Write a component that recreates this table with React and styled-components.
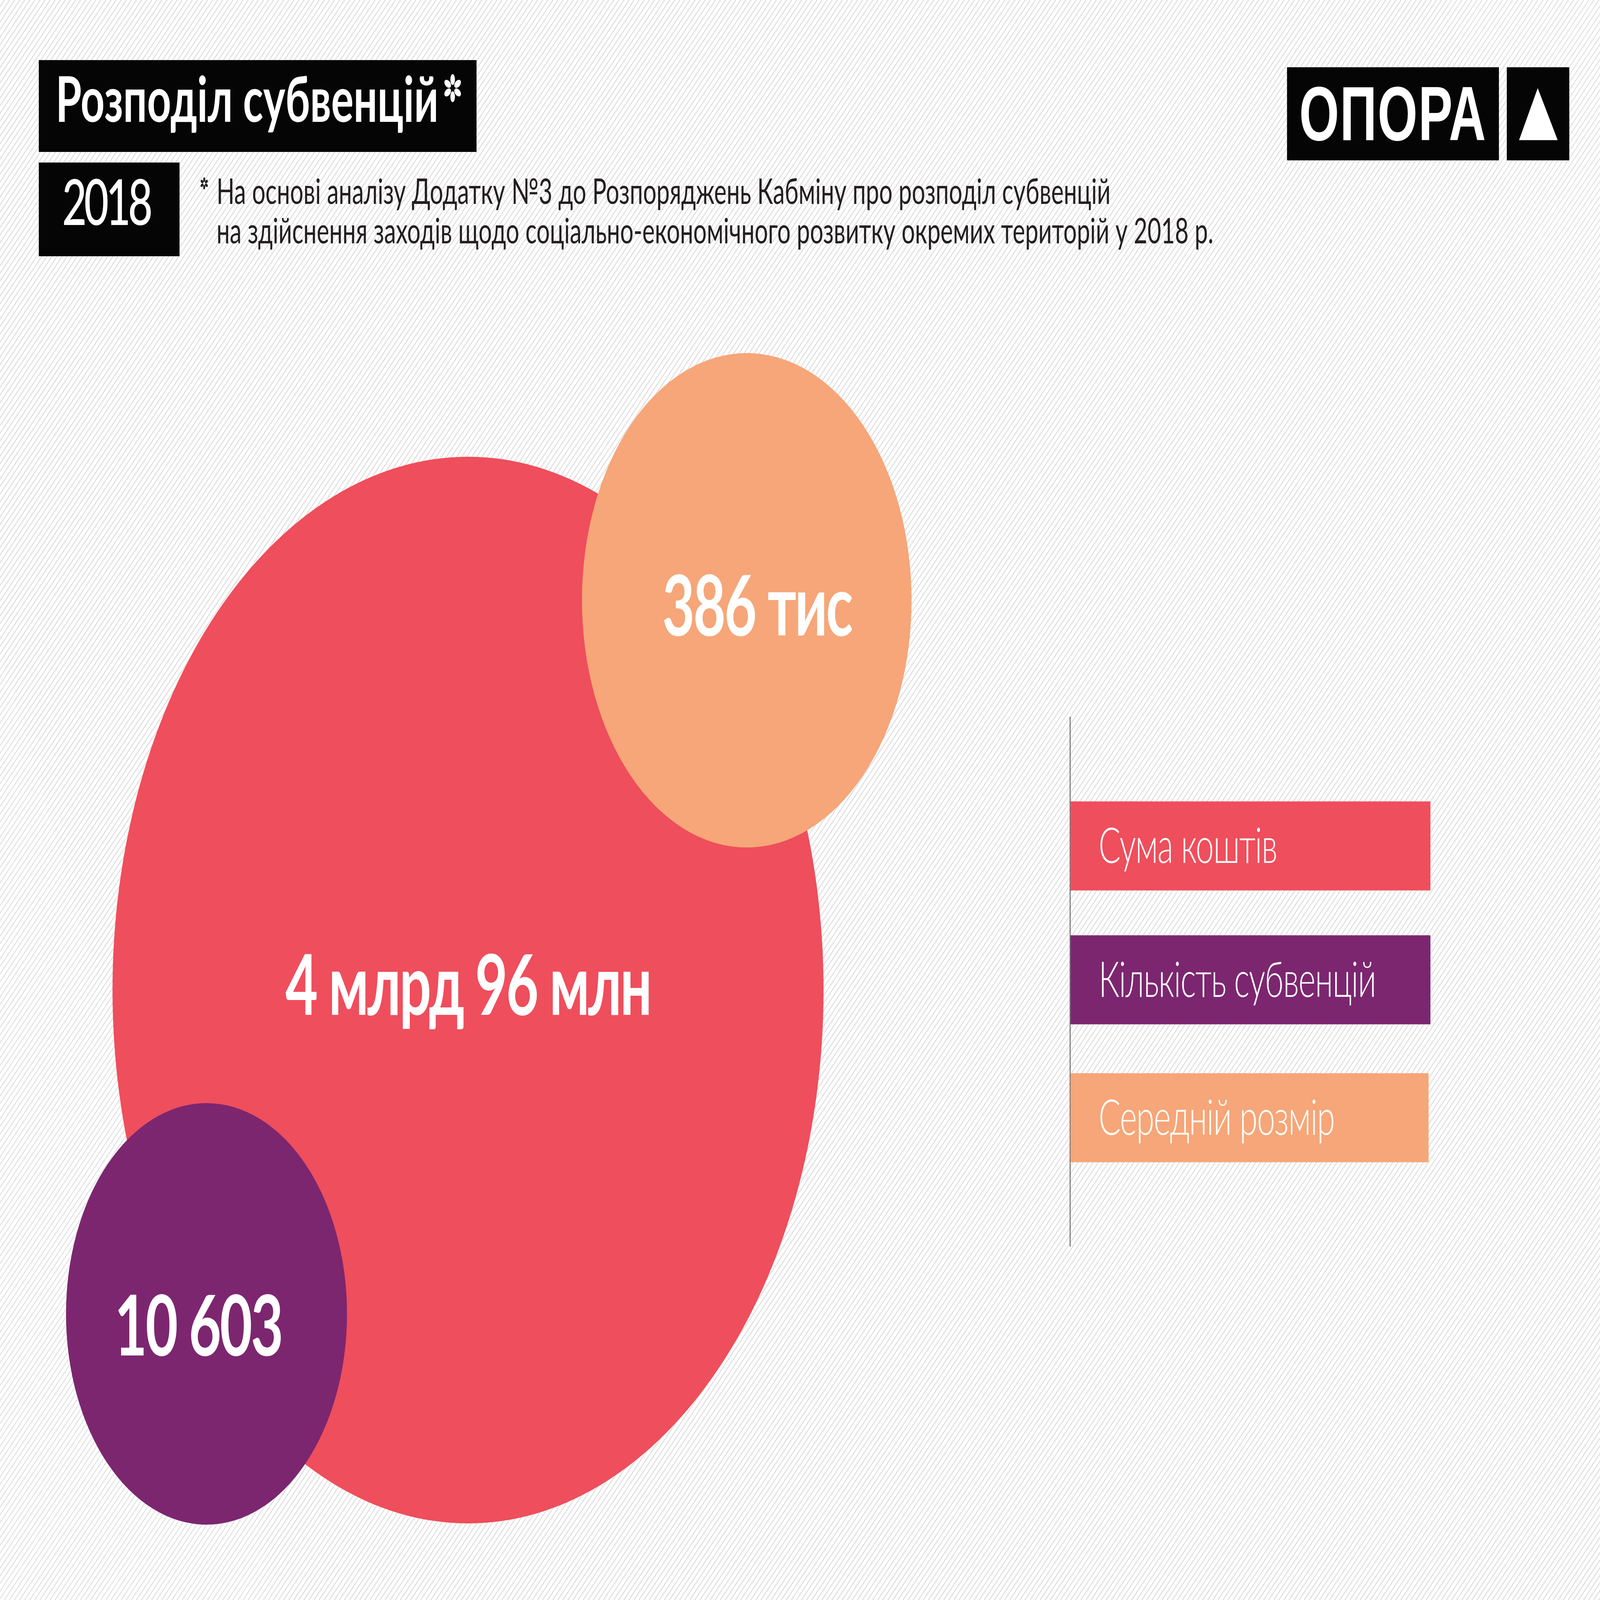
import React, { useEffect, useState } from "react";
import styled, { createGlobalStyle } from "styled-components";

const DESIGN_W = 7709;
const DESIGN_H = 5139;

const GlobalStyle = createGlobalStyle`
  html, body { margin: 0; padding: 0; overflow: hidden; }
  body { background: #fff; font-family: Lato, "Open Sans", sans-serif; }
`;

const Viewport = styled.div`
  width: 100vw;
  height: 100vh;
  overflow: hidden;
`;

const Page = styled.div`
  width: ${DESIGN_W}px;
  height: ${DESIGN_H}px;
  overflow: hidden;
  transform-origin: 0 0;
  background-color: #fff;
  background-image: repeating-linear-gradient(135deg, #fff 0 13.5px, #dedede 13.5px 17.3px);
  font-family: Lato, "Open Sans", sans-serif;
`;

const Header = styled.header`
  display: flex;
  justify-content: space-between;
  align-items: flex-start;
  padding: 193px 148px 0 187px;
`;

const HeadLeft = styled.div`
  display: flex;
  flex-direction: column;
  gap: 34px;
`;

const TitleBox = styled.div`
  box-sizing: border-box;
  width: 2109px;
  height: 295px;
  padding: 20px 0 0 81px;
  background: #050505;
  display: flex;
  align-items: flex-start;
  white-space: nowrap;
`;

const Title = styled.h1`
  margin: 0;
  font-size: 202px;
  line-height: 1;
  font-weight: 700;
  color: #fff;
`;

const TitleStar = styled.span`
  margin: 24px 0 0 22px;
  display: block;
  svg { display: block; }
`;

const SubRow = styled.div`
  display: flex;
  align-items: flex-start;
`;

const YearBox = styled.div`
  box-sizing: border-box;
  width: 678px;
  height: 301px;
  padding: 20px 30px 0 0;
  background: #050505;
  color: #fff;
  font-size: 205px;
  line-height: 1;
  font-weight: 500;
  letter-spacing: -13px;
  text-align: center;
`;

const Note = styled.div`
  display: flex;
  align-items: flex-start;
  margin-left: 99px;
  padding-top: 25px;
  color: #231f20;
  font-size: 114px;
  line-height: 127px;
  font-weight: 400;
  white-space: nowrap;
`;

const NoteStar = styled.span`
  display: block;
  margin: 22px 39px 0 0;
  svg { display: block; }
`;

const NoteLine = styled.span`
  display: block;
`;

const Logo = styled.div`
  display: flex;
  gap: 38px;
  margin-top: 23px;
`;

const LogoWord = styled.div`
  width: 1021px;
  height: 299px;
  background: #050505;
  color: #fff;
  display: flex;
  align-items: center;
  justify-content: center;
  font-family: "Liberation Sans", Arial, sans-serif;
  font-weight: 700;
  font-size: 247px;
  line-height: 1;
  letter-spacing: 4px;
`;

const LogoMark = styled.div`
  width: 301px;
  height: 299px;
  background: #050505;
  svg { display: block; }
`;

const Main = styled.main`
  display: flex;
  align-items: flex-start;
`;

const Chart = styled.div`
  position: relative;
  flex-shrink: 0;
  width: 5154px;
  height: 4316px;
`;

const Bubble = styled.div`
  position: absolute;
  left: ${(p) => p.$x}px;
  top: ${(p) => p.$y}px;
  width: ${(p) => p.$size}px;
  height: ${(p) => p.$size}px;
  border-radius: 50%;
  background: ${(p) => p.$color};
  display: flex;
  align-items: center;
  justify-content: center;
`;

const BubbleLabel = styled.span`
  color: #fff;
  font-size: 270px;
  line-height: 1;
  font-weight: 700;
  letter-spacing: -7px;
  white-space: nowrap;
  transform: translate(${(p) => p.$dx || 0}px, ${(p) => p.$dy || 0}px);
`;

const Legend = styled.div`
  margin-top: 1479px;
  border-left: 4px solid #58595b;
  padding: 272px 0 271px;
  display: flex;
  flex-direction: column;
`;

const LegendBar = styled.div`
  box-sizing: border-box;
  width: ${(p) => p.$w}px;
  height: 286px;
  margin-top: ${(p) => p.$mt || 0}px;
  padding: 0 0 12px 135px;
  background: ${(p) => p.$color};
  color: #fff;
  display: flex;
  align-items: center;
  font-size: 158px;
  font-weight: 300;
  letter-spacing: -3px;
  white-space: nowrap;
`;

const RED = "#ef4e5c";
const ORANGE = "#f6a678";
const PURPLE = "#7c2670";

function Star({ size, color }) {
  const petals = [0, 60, 120, 180, 240, 300];
  return (
    <svg width={size} height={size} viewBox="-50 -50 100 100">
      {petals.map((a) => (
        <ellipse
          key={a}
          cx="0"
          cy="-30"
          rx="12"
          ry="19"
          fill={color}
          transform={`rotate(${a})`}
        />
      ))}
    </svg>
  );
}

const bubbles = [
  { id: "sum", x: 542, y: 644, size: 3426, color: RED, label: "4 млрд 96 млн", dx: 0, dy: -25 },
  { id: "avg", x: 2804, y: 311, size: 1588, color: ORANGE, label: "386 тис", dx: 49, dy: 9 },
  { id: "cnt", x: 318, y: 2720, size: 1354, color: PURPLE, label: "10 603", dx: -40, dy: 30 },
];

const legend = [
  { id: "sum", text: "Сума коштів", color: RED, w: 1734, mt: 0 },
  { id: "cnt", text: "Кількість субвенцій", color: PURPLE, w: 1734, mt: 144 },
  { id: "avg", text: "Середній розмір", color: ORANGE, w: 1725, mt: 157 },
];

// the browser window can be smaller than the design, so stretch the page to fill it
const fit = () => ({
  x: window.innerWidth / DESIGN_W,
  y: window.innerHeight / DESIGN_H,
});

export default function App() {
  const [scale, setScale] = useState(fit);

  useEffect(() => {
    const onResize = () => setScale(fit());
    window.addEventListener("resize", onResize);
    return () => window.removeEventListener("resize", onResize);
  }, []);

  return (
    <>
      <GlobalStyle />
      <Viewport>
        <Page style={{ transform: `scale(${scale.x}, ${scale.y})` }}>
          <Header>
            <HeadLeft>
              <TitleBox>
                <Title>Розподіл субвенцій</Title>
                <TitleStar>
                  <Star size={92} color="#fff" />
                </TitleStar>
              </TitleBox>
              <SubRow>
                <YearBox>2018</YearBox>
                <Note>
                  <NoteStar>
                    <Star size={40} color="#231f20" />
                  </NoteStar>
                  <div>
                    <NoteLine>На основі аналізу Додатку №3 до Розпоряджень Кабміну про розподіл субвенцій</NoteLine>
                    <NoteLine>на здійснення заходів щодо соціально-економічного розвитку окремих територій у 2018 р.</NoteLine>
                  </div>
                </Note>
              </SubRow>
            </HeadLeft>
            <Logo>
              <LogoWord>ОПОРА</LogoWord>
              <LogoMark>
                <svg width="301" height="299" viewBox="0 0 301 299">
                  <polygon points="149,67 245,234 59,234" fill="#fff" />
                </svg>
              </LogoMark>
            </Logo>
          </Header>
          <Main>
            <Chart>
              {bubbles.map((b) => (
                <Bubble key={b.id} $x={b.x} $y={b.y} $size={b.size} $color={b.color}>
                  <BubbleLabel $dx={b.dx} $dy={b.dy}>{b.label}</BubbleLabel>
                </Bubble>
              ))}
            </Chart>
            <Legend>
              {legend.map((l) => (
                <LegendBar key={l.id} $color={l.color} $w={l.w} $mt={l.mt}>
                  {l.text}
                </LegendBar>
              ))}
            </Legend>
          </Main>
        </Page>
      </Viewport>
    </>
  );
}
